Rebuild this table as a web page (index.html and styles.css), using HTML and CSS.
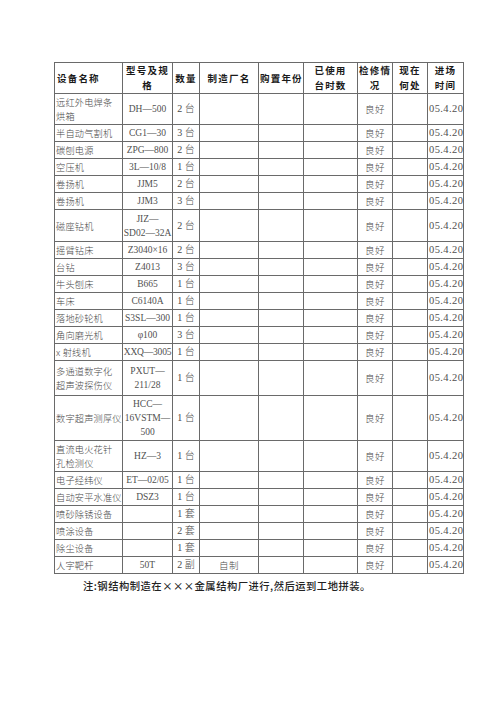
FILE: index.html
```html
<!DOCTYPE html>
<html lang="zh">
<head>
<meta charset="utf-8">
<title>设备表</title>
<link rel="stylesheet" href="styles.css">
</head>
<body>
<div class="page">
<table class="equip">
<colgroup>
<col class="c1"><col class="c2"><col class="c3"><col class="c4"><col class="c5"><col class="c6"><col class="c7"><col class="c8"><col class="c9">
</colgroup>
<thead>
<tr class="hd">
<th class="left">设备名称</th>
<th>型号及规<br>格</th>
<th>数量</th>
<th>制造厂名</th>
<th>购置年份</th>
<th>已使用<br>台时数</th>
<th>检修情<br>况</th>
<th>现在<br>何处</th>
<th>进场<br>时间</th>
</tr>
</thead>
<tbody>
<tr class="r1"><td class="name">远红外电焊条<br>烘箱</td><td class="mdl">DH—500</td><td class="qty">2 台</td><td></td><td></td><td></td><td class="st">良好</td><td></td><td class="dt">05.4.20</td></tr>
<tr><td class="name">半自动气割机</td><td class="mdl">CG1—30</td><td class="qty">3 台</td><td></td><td></td><td></td><td class="st">良好</td><td></td><td class="dt">05.4.20</td></tr>
<tr><td class="name">碳刨电源</td><td class="mdl">ZPG—800</td><td class="qty">2 台</td><td></td><td></td><td></td><td class="st">良好</td><td></td><td class="dt">05.4.20</td></tr>
<tr><td class="name">空压机</td><td class="mdl">3L—10/8</td><td class="qty">1 台</td><td></td><td></td><td></td><td class="st">良好</td><td></td><td class="dt">05.4.20</td></tr>
<tr><td class="name">卷扬机</td><td class="mdl">JJM5</td><td class="qty">2 台</td><td></td><td></td><td></td><td class="st">良好</td><td></td><td class="dt">05.4.20</td></tr>
<tr><td class="name">卷扬机</td><td class="mdl">JJM3</td><td class="qty">3 台</td><td></td><td></td><td></td><td class="st">良好</td><td></td><td class="dt">05.4.20</td></tr>
<tr class="r2"><td class="name">磁座钻机</td><td class="mdl">JIZ—<br>SD02—32A</td><td class="qty">2 台</td><td></td><td></td><td></td><td class="st">良好</td><td></td><td class="dt">05.4.20</td></tr>
<tr><td class="name">摇臂钻床</td><td class="mdl">Z3040×16</td><td class="qty">2 台</td><td></td><td></td><td></td><td class="st">良好</td><td></td><td class="dt">05.4.20</td></tr>
<tr><td class="name">台钻</td><td class="mdl">Z4013</td><td class="qty">3 台</td><td></td><td></td><td></td><td class="st">良好</td><td></td><td class="dt">05.4.20</td></tr>
<tr><td class="name">牛头刨床</td><td class="mdl">B665</td><td class="qty">1 台</td><td></td><td></td><td></td><td class="st">良好</td><td></td><td class="dt">05.4.20</td></tr>
<tr><td class="name">车床</td><td class="mdl">C6140A</td><td class="qty">1 台</td><td></td><td></td><td></td><td class="st">良好</td><td></td><td class="dt">05.4.20</td></tr>
<tr><td class="name">落地砂轮机</td><td class="mdl">S3SL—300</td><td class="qty">1 台</td><td></td><td></td><td></td><td class="st">良好</td><td></td><td class="dt">05.4.20</td></tr>
<tr><td class="name">角向磨光机</td><td class="mdl">φ100</td><td class="qty">3 台</td><td></td><td></td><td></td><td class="st">良好</td><td></td><td class="dt">05.4.20</td></tr>
<tr><td class="name">x 射线机</td><td class="mdl tight">XXQ—3005</td><td class="qty">1 台</td><td></td><td></td><td></td><td class="st">良好</td><td></td><td class="dt">05.4.20</td></tr>
<tr class="r3"><td class="name">多通道数字化<br>超声波探伤仪</td><td class="mdl">PXUT—<br>211/28</td><td class="qty">1 台</td><td></td><td></td><td></td><td class="st">良好</td><td></td><td class="dt">05.4.20</td></tr>
<tr class="r4"><td class="name">数字超声测厚仪</td><td class="mdl">HCC—<br>16VSTM—<br>500</td><td class="qty">1 台</td><td></td><td></td><td></td><td class="st">良好</td><td></td><td class="dt">05.4.20</td></tr>
<tr class="r5"><td class="name">直流电火花针<br>孔检测仪</td><td class="mdl">HZ—3</td><td class="qty">1 台</td><td></td><td></td><td></td><td class="st">良好</td><td></td><td class="dt">05.4.20</td></tr>
<tr><td class="name">电子经纬仪</td><td class="mdl">ET—02/05</td><td class="qty">1 台</td><td></td><td></td><td></td><td class="st">良好</td><td></td><td class="dt">05.4.20</td></tr>
<tr><td class="name">自动安平水准仪</td><td class="mdl">DSZ3</td><td class="qty">1 台</td><td></td><td></td><td></td><td class="st">良好</td><td></td><td class="dt">05.4.20</td></tr>
<tr><td class="name">喷砂除锈设备</td><td class="mdl"></td><td class="qty">1 套</td><td></td><td></td><td></td><td class="st">良好</td><td></td><td class="dt">05.4.20</td></tr>
<tr><td class="name">喷涂设备</td><td class="mdl"></td><td class="qty">2 套</td><td></td><td></td><td></td><td class="st">良好</td><td></td><td class="dt">05.4.20</td></tr>
<tr><td class="name">除尘设备</td><td class="mdl"></td><td class="qty">1 套</td><td></td><td></td><td></td><td class="st">良好</td><td></td><td class="dt">05.4.20</td></tr>
<tr><td class="name">人字靶杆</td><td class="mdl">50T</td><td class="qty">2 副</td><td class="mk">自制</td><td></td><td></td><td class="st">良好</td><td></td><td class="dt">05.4.20</td></tr>
</tbody>
</table>
<p class="note">注:钢结构制造在×××金属结构厂进行,然后运到工地拼装。</p>
</div>
</body>
</html>
```
FILE: styles.css
```css
html, body {
  margin: 0;
  padding: 0;
  background: #ffffff;
}
.page {
  padding: 62px 0 0 54px;
}
.equip {
  border-collapse: collapse;
  table-layout: fixed;
  width: 410px;
  font-family: "Liberation Serif", "Noto Sans CJK SC", serif;
  font-size: 10px;
  color: #4a4a4a;
}
.c1 { width: 68px; }
.c2 { width: 50px; }
.c3 { width: 27px; }
.c4 { width: 59px; }
.c5 { width: 45px; }
.c6 { width: 54px; }
.c7 { width: 35px; }
.c8 { width: 35px; }
.c9 { width: 36px; }
.equip th, .equip td {
  border: 1px solid #6a6a6a;
  padding: 0 1px;
  vertical-align: middle;
  text-align: center;
  line-height: 14px;
  white-space: nowrap;
  overflow: visible;
}
.equip tr { height: 17px; }
.equip tr.hd { height: 29px; }
.equip tr.r1 { height: 31px; }
.equip tr.r2 { height: 32px; }
.equip tr.r3 { height: 35px; }
.equip tr.r4 { height: 45px; }
.equip tr.r5 { height: 31px; }
.equip th {
  font-family: "Noto Sans CJK SC", sans-serif;
  font-weight: 700;
  font-size: 9.5px;
  letter-spacing: 1.2px;
  color: #1a1a1a;
  line-height: 15px;
}
.equip th.left { text-align: left; padding-left: 2px; }
.equip td.name {
  text-align: left;
  font-family: "Noto Sans CJK SC", sans-serif;
  font-weight: 300;
  font-size: 9.2px;
  letter-spacing: 0.2px;
  padding-left: 1px;
}
.equip td.mdl {
  font-size: 9.5px;
  padding: 0;
  color: #505050;
}
.equip td.tight {
  letter-spacing: -0.2px;
}
.qty {
  font-family: "Liberation Serif", "Noto Sans CJK SC", serif;
  font-weight: 300;
  font-size: 10px;
}
.st, .mk {
  font-family: "Noto Sans CJK SC", sans-serif;
  font-weight: 300;
  font-size: 9.5px;
  letter-spacing: 0.5px;
}
.equip td.dt {
  text-align: left;
  padding: 0 0 0 1px;
  font-size: 10.5px;
  letter-spacing: 0.4px;
  color: #505050;
}
.note {
  margin: 4px 0 0 29px;
  font-family: "Noto Sans CJK SC", sans-serif;
  font-size: 10.3px;
  font-weight: 500;
  color: #222222;
  letter-spacing: 0.5px;
}
```
